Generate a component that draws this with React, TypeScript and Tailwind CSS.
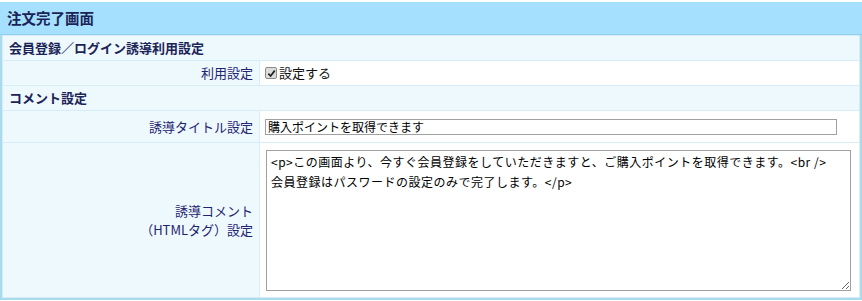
const pattern =
  "bg-[repeating-conic-gradient(#dcf2fc_0_25%,#ffffff_0_50%)] bg-[length:2px_2px]"

const Label = ({ children }: { children: React.ReactNode }) => (
  <th
    className={`w-[259px] border border-[#d6ecf6] px-[6px] text-right align-middle text-[13px] font-normal text-[#1f2470] ${pattern}`}
  >
    {children}
  </th>
)

const Section = ({ title }: { title: string }) => (
  <tr>
    <th
      colSpan={2}
      className={`h-[25px] border border-[#d6ecf6] px-[6px] text-left text-[13px] font-bold text-[#1b2457] ${pattern}`}
    >
      {title}
    </th>
  </tr>
)

export default function App() {
  return (
    <div
      className="w-[862px] h-[301px] bg-white pt-[2px]"
      style={{ fontFamily: '"Noto Sans CJK JP", "Noto Sans", sans-serif' }}
    >
      <div className="h-[33px] bg-[#a6e0ff] px-[7px] flex items-center border-b border-[#8fd0ea]">
        <h1 className="text-[14.5px] font-bold text-[#1b2457] leading-none">注文完了画面</h1>
      </div>
      <div className="w-[862px] border-x-2 border-b-2 border-[#a9dbec]">
        <table className="w-full border-collapse">
          <tbody>
            <Section title="会員登録／ログイン誘導利用設定" />
            <tr className="h-[25px]">
              <Label>利用設定</Label>
              <td className="border border-[#d6ecf6] bg-white px-[5px] text-[13px] text-[#111]">
                <label className="flex items-center gap-[2px]">
                  <span className="flex h-[12px] w-[12px] items-center justify-center rounded-[2px] border border-[#8a8a8a] bg-[#dcdcdc]">
                    <svg viewBox="0 0 10 10" className="h-[9px] w-[9px]">
                      <path d="M1.5 5.2 L4 7.8 L8.6 1.8" fill="none" stroke="#222" strokeWidth="1.9" />
                    </svg>
                  </span>
                  設定する
                </label>
              </td>
            </tr>
            <Section title="コメント設定" />
            <tr className="h-[32px]">
              <Label>誘導タイトル設定</Label>
              <td className="border border-[#d6ecf6] bg-white px-[5px]">
                <input
                  type="text"
                  defaultValue="購入ポイントを取得できます"
                  className="block h-[16px] w-[572px] border border-[#a0a0a0] px-[2px] text-[12px] leading-none text-black outline-none"
                />
              </td>
            </tr>
            <tr className="h-[155px]">
              <Label>
                <span className="block leading-[19px]">
                  誘導コメント
                  <br />
                  （HTMLタグ）設定
                </span>
              </Label>
              <td className="border border-[#d6ecf6] bg-white pl-[6px] pr-[8px] py-[6px]">
                <textarea
                  defaultValue={
                    "<p>この画面より、今すぐ会員登録をしていただきますと、ご購入ポイントを取得できます。<br />\n会員登録はパスワードの設定のみで完了します。</p>"
                  }
                  className="block h-[141px] w-[585px] resize border border-[#a0a0a0] px-[4px] py-[1px] text-[12px] leading-[20px] tracking-[0.5px] text-black outline-none"
                />
              </td>
            </tr>
          </tbody>
        </table>
      </div>
    </div>
  )
}
